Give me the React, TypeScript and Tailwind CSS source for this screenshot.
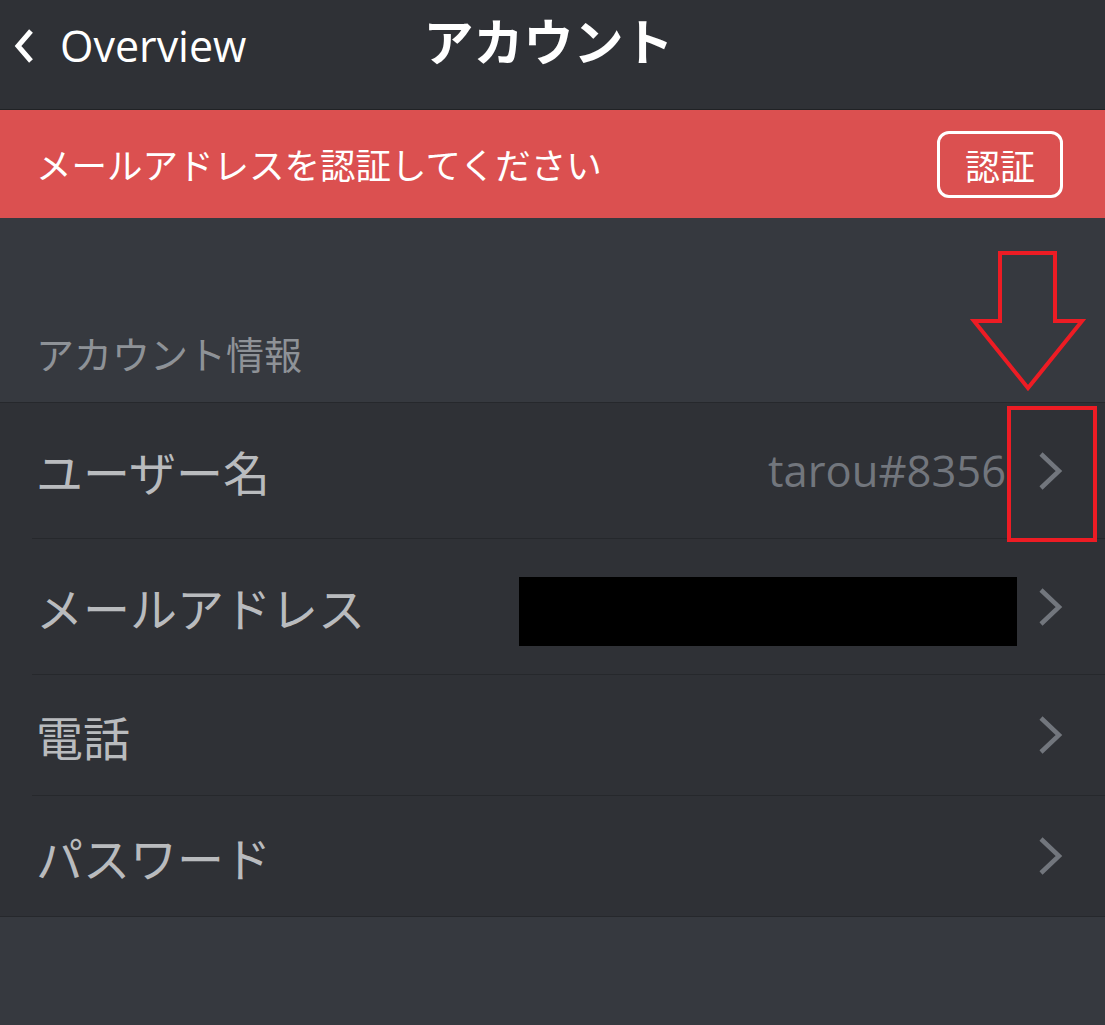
const jp = "font-['Noto_Sans_CJK_JP',sans-serif]"

function Chevron() {
  return (
    <svg width="28" height="40" viewBox="0 0 28 40" className="shrink-0">
      <path d="M4 3 L22 20 L4 37" fill="none" stroke="#72767d" strokeWidth="4.5" />
    </svg>
  )
}

function Row({ label, h, last, children }: { label: string; h: string; last?: boolean; children?: React.ReactNode }) {
  return (
    <div className="pl-[32px]">
      <div className={`flex items-center ${h} pl-[4px] pr-[40px] ${last ? "" : "border-b border-[#26282c]"}`}>
        <span className={`${jp} text-[47px] text-[#b9bbbe] leading-none`}>{label}</span>
        <div className="ml-auto flex items-center">
          {children}
          <Chevron />
        </div>
      </div>
    </div>
  )
}

export default function App() {
  return (
    <div className="relative w-[1105px] h-[1025px] bg-[#36393f] overflow-hidden">
      {/* Nav bar */}
      <div className="relative flex items-center h-[110px] bg-[#2f3136] border-b border-[#202225]">
        <div className="flex items-center pl-[10px] pb-[18px] text-white">
          <svg width="28" height="40" viewBox="0 0 28 40">
            <path d="M21 5 L8 20 L21 35" fill="none" stroke="white" strokeWidth="5" />
          </svg>
          <span className="ml-[22px] text-[43px] font-['Open_Sans',sans-serif] leading-none">Overview</span>
        </div>
        <div className={`absolute left-0 right-0 top-[14px] text-center ${jp} font-bold text-[50px] text-white leading-none pr-[8px]`}>
          アカウント
        </div>
      </div>

      {/* Verify banner */}
      <div className="flex items-center h-[108px] bg-[#db5050] pl-[36px] pr-[42px]">
        <span className={`${jp} text-[35.5px] text-white leading-none`}>メールアドレスを認証してください</span>
        <div className={`ml-auto w-[126px] h-[67px] rounded-[12px] border-[3px] border-white flex items-center justify-center ${jp} text-[35px] text-white leading-none`}>
          認証
        </div>
      </div>

      {/* Section header */}
      <div className="h-[185px] flex items-end pl-[36px] pb-[30px] border-b border-[#26282c]">
        <span className={`${jp} text-[38px] text-[#8e9297] leading-none`}>アカウント情報</span>
      </div>

      <div className="bg-[#2f3136] border-b border-[#26282c]">
        <Row label="ユーザー名" h="h-[136px]">
          <span className="text-[43.5px] font-['Open_Sans',sans-serif] text-[#72767d] mr-[31px] leading-none">tarou#8356</span>
        </Row>
        <Row label="メールアドレス" h="h-[136px]">
          <div className="w-[498px] h-[69px] bg-black mr-[20px] mt-[9px]" />
        </Row>
        <Row label="電話" h="h-[121px]" />
        <Row label="パスワード" h="h-[120px]" last />
      </div>

      {/* Red annotation */}
      <svg className="absolute left-0 top-0 pointer-events-none" width="1105" height="1025">
        <polygon points="1000,253 1055,253 1055,321 1082,321 1028,388 974,321 1000,321" fill="none" stroke="#ed1c24" strokeWidth="4" strokeLinejoin="miter" />
        <rect x="1009" y="408" width="86" height="132" fill="none" stroke="#ed1c24" strokeWidth="4" />
      </svg>
    </div>
  )
}
